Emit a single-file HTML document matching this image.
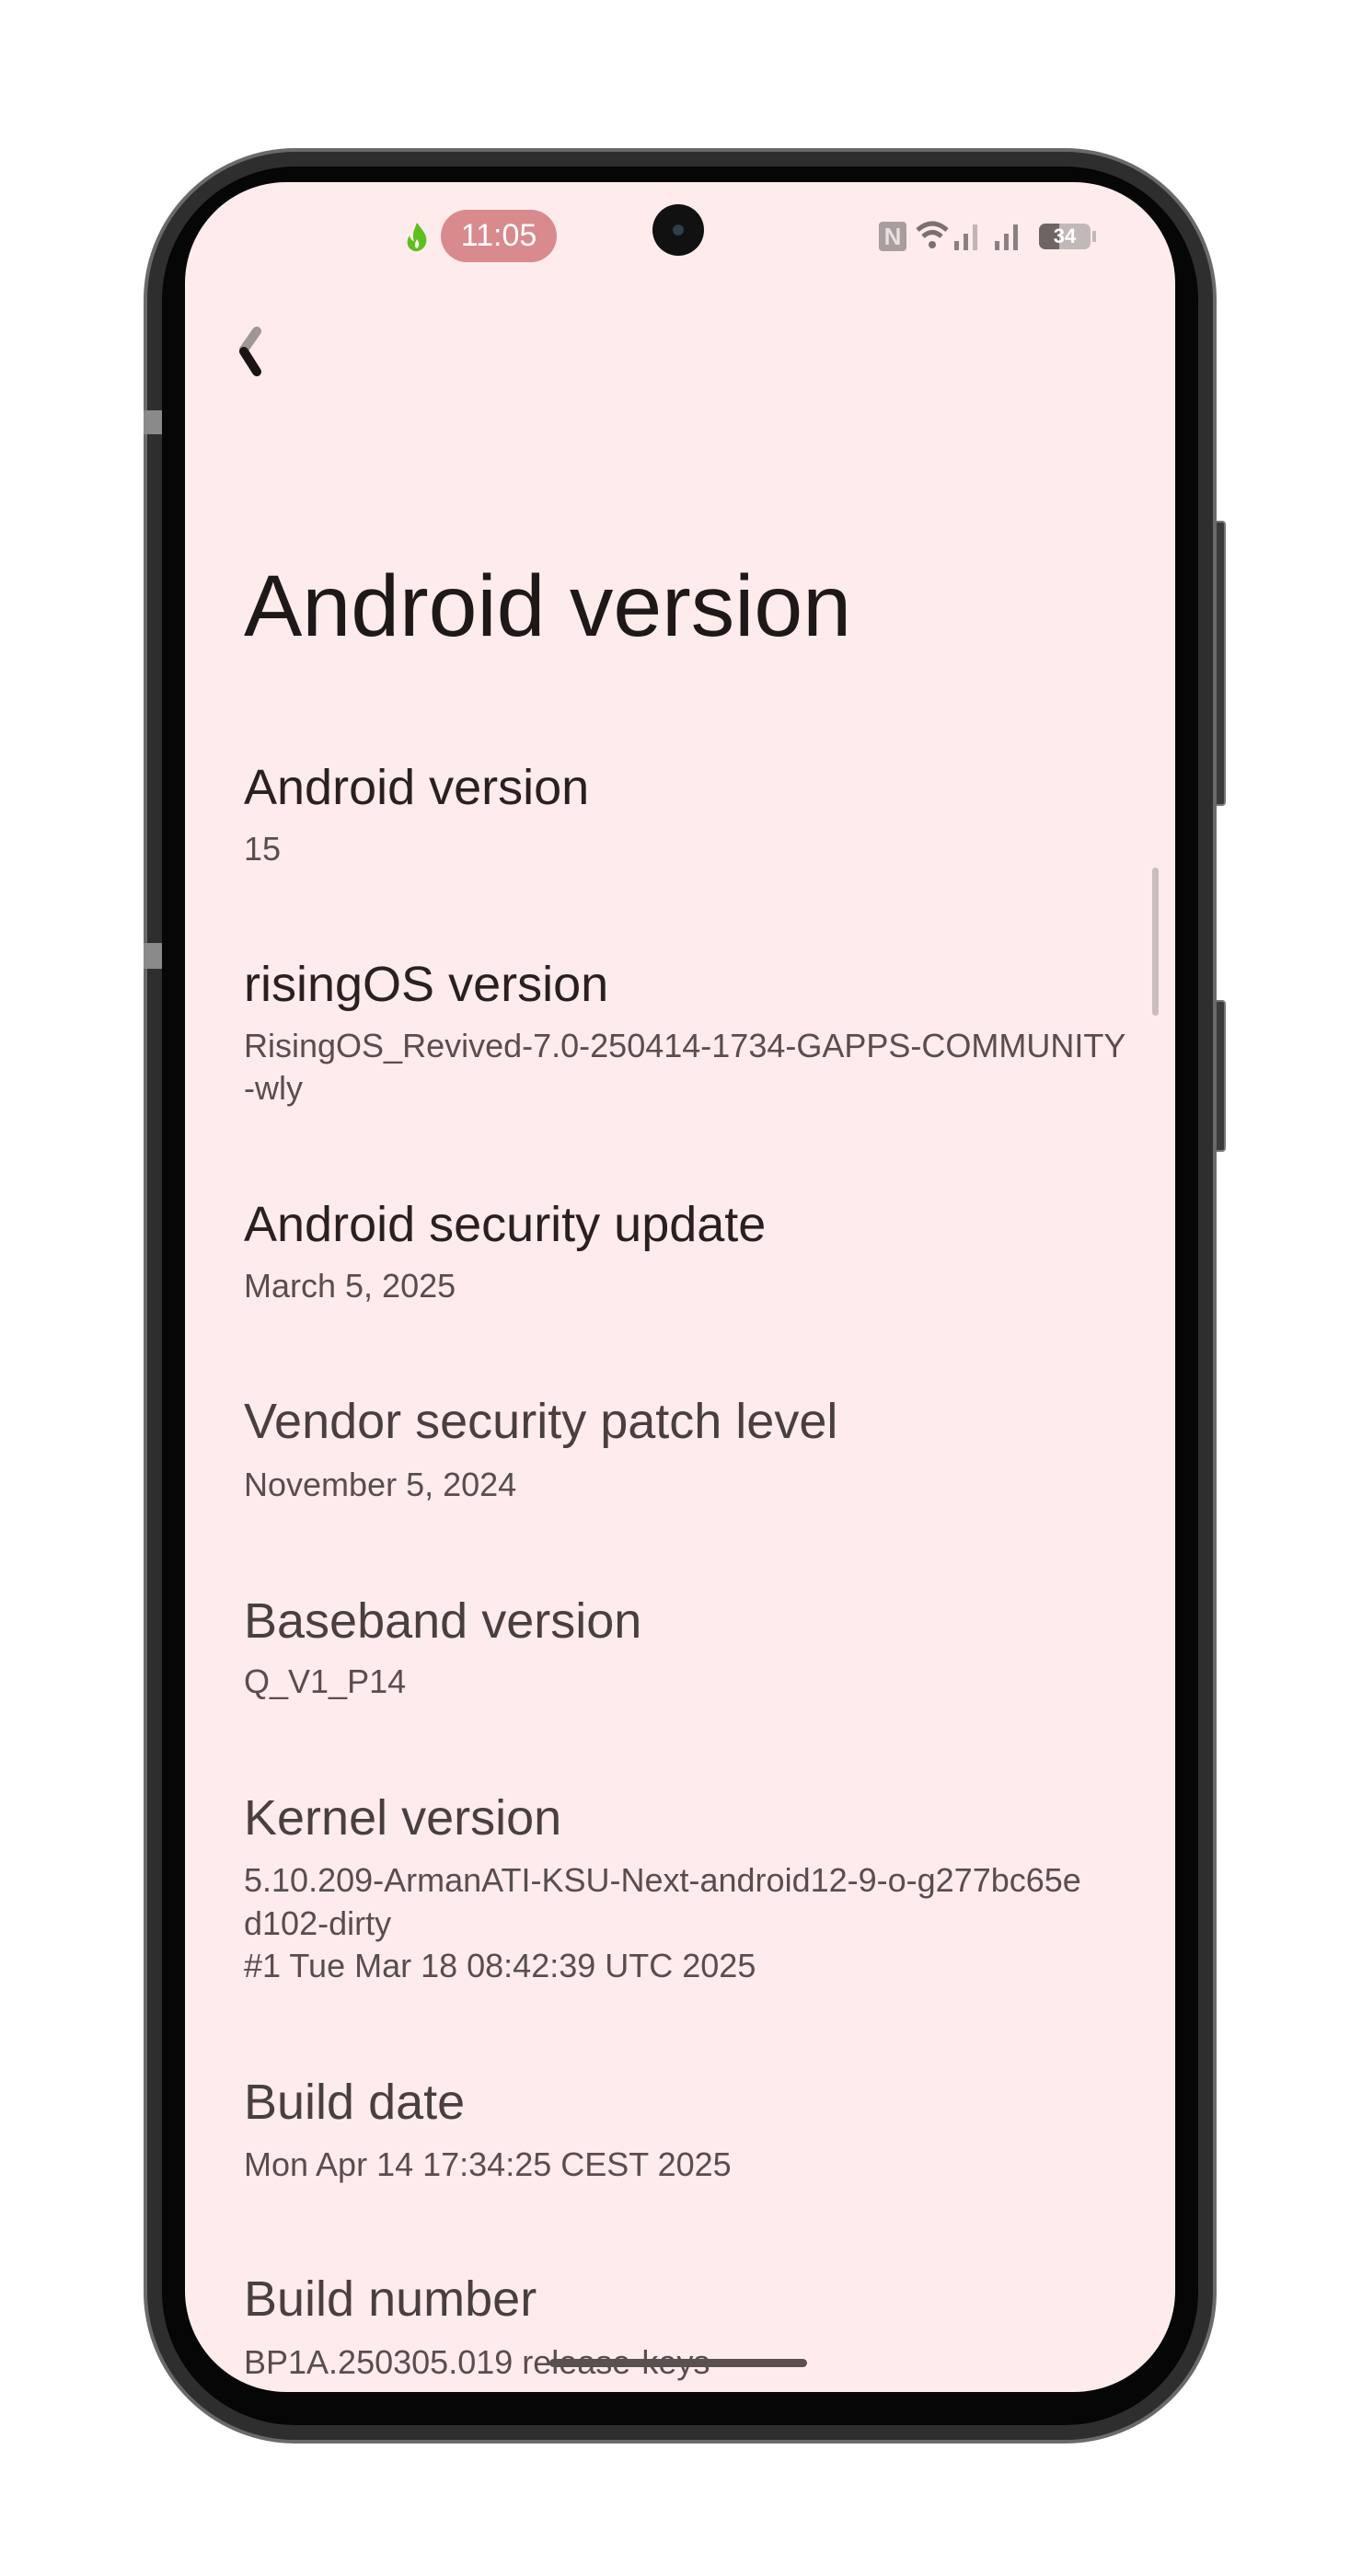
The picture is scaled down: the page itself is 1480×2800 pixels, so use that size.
<!DOCTYPE html>
<html><head><meta charset="utf-8"><style>
*{margin:0;padding:0;box-sizing:border-box}
body{width:1480px;height:2800px;background:#fff;position:relative;overflow:hidden;font-family:"Liberation Sans",sans-serif}
.abs{position:absolute}
.frame{left:156px;top:161px;width:1166px;height:2495px;border-radius:165px;background:#2e2e2e;border:4px solid #6a6a6a}
.bezel{left:176px;top:181px;width:1126px;height:2455px;border-radius:145px;background:#060606}
.screen{left:201px;top:198px;width:1076px;height:2402px;border-radius:110px;background:#fdeceb;overflow:hidden}
.t{position:absolute;left:64px;white-space:nowrap;line-height:1}
.h{font-size:54px;color:#2a2020}
.h2{font-size:54px;color:#4a3f3f}
.s{font-size:36px;color:#5a4d4d}
</style></head><body>
<div class="abs" style="left:1316px;top:566px;width:16px;height:310px;background:#3a3a3a;border-radius:4px;border:2px solid #777"></div>
<div class="abs" style="left:1316px;top:1087px;width:16px;height:165px;background:#3a3a3a;border-radius:4px;border:2px solid #777"></div>
<div class="abs frame"></div>
<div class="abs" style="left:156px;top:446px;width:22px;height:26px;background:#8a8a8a"></div>
<div class="abs" style="left:156px;top:1025px;width:22px;height:28px;background:#8a8a8a"></div>
<div class="abs bezel"></div>
<div class="abs screen">
  <svg class="abs" style="left:238px;top:42px" width="28" height="36" viewBox="0 0 28 36"><path d="M14 2 C20 10 26 16 24 24 C22 32 14 35 9 32 C3 29 2 22 6 16 C7 20 9 22 11 22 C8 14 12 8 14 2Z" fill="#5fbf1f"/><path d="M14 20 C17 24 17 28 14 30 C11 29 11 25 14 20Z" fill="#fdeceb"/></svg>
  <div class="abs" style="left:278px;top:30px;width:126px;height:57px;border-radius:29px;background:#d98a8c;color:#fff;font-size:34px;line-height:57px;text-align:center">11:05</div>
  <div class="abs" style="left:508px;top:24px;width:56px;height:56px;border-radius:50%;background:#111"><div class="abs" style="left:22px;top:22px;width:12px;height:12px;border-radius:50%;background:#2d3f4a"></div></div>
  <div class="abs" style="left:754px;top:43px;width:30px;height:32px;background:#a89e9e;border-radius:4px;color:#e8e0e0;font-size:26px;font-weight:bold;text-align:center;line-height:32px">N</div>
  <svg class="abs" style="left:792px;top:40px" width="40" height="36" viewBox="0 0 40 36"><path d="M4 12 Q20 -2 36 12" stroke="#7a7070" stroke-width="5" fill="none"/><path d="M10 19 Q20 10 30 19" stroke="#7a7070" stroke-width="5" fill="none"/><circle cx="20" cy="28" r="4" fill="#7a7070"/></svg>
  <svg class="abs" style="left:834px;top:42px" width="90" height="34" viewBox="0 0 90 34"><rect x="2" y="22" width="5" height="10" fill="#8a8080"/><rect x="12" y="14" width="5" height="18" fill="#8a8080"/><rect x="22" y="4" width="5" height="28" fill="#c0b6b6"/><rect x="46" y="22" width="5" height="10" fill="#8a8080"/><rect x="56" y="14" width="5" height="18" fill="#8a8080"/><rect x="66" y="4" width="5" height="28" fill="#8a8080"/></svg>
  <div class="abs" style="left:928px;top:45px;width:56px;height:28px;border-radius:7px;background:#c2b8b8;overflow:hidden"><div style="width:22px;height:28px;background:#6e6464"></div><div class="abs" style="left:0;top:0;width:56px;line-height:28px;text-align:center;color:#fff;font-size:22px;font-weight:bold">34</div></div>
  <div class="abs" style="left:986px;top:53px;width:4px;height:12px;background:#c2b8b8"></div>
  <svg class="abs" style="left:52px;top:152px" width="40" height="64" viewBox="0 0 40 64"><path d="M26 10 L12 30" stroke="#a09696" stroke-width="10" stroke-linecap="round"/><path d="M12 32 L26 54" stroke="#1c1414" stroke-width="10" stroke-linecap="round"/></svg>
  <div class="t" style="font-size:95px;color:#1f1818;top:414px">Android version</div>

  <div class="t h" style="top:631px">Android version</div>
  <div class="t s" style="top:707px">15</div>

  <div class="t h" style="top:845px">risingOS version</div>
  <div class="t s" style="top:921px">RisingOS_Revived-7.0-250414-1734-GAPPS-COMMUNITY</div>
  <div class="t s" style="top:967px">-wly</div>

  <div class="t h" style="top:1106px">Android security update</div>
  <div class="t s" style="top:1182px">March 5, 2025</div>

  <div class="t h2" style="top:1320px">Vendor security patch level</div>
  <div class="t s" style="top:1398px">November 5, 2024</div>

  <div class="t h2" style="top:1537px">Baseband version</div>
  <div class="t s" style="top:1612px">Q_V1_P14</div>

  <div class="t h2" style="top:1751px">Kernel version</div>
  <div class="t s" style="top:1828px">5.10.209-ArmanATI-KSU-Next-android12-9-o-g277bc65e</div>
  <div class="t s" style="top:1875px">d102-dirty</div>
  <div class="t s" style="top:1921px">#1 Tue Mar 18 08:42:39 UTC 2025</div>

  <div class="t h2" style="top:2060px">Build date</div>
  <div class="t s" style="top:2137px">Mon Apr 14 17:34:25 CEST 2025</div>

  <div class="t h2" style="top:2274px">Build number</div>
  <div class="t s" style="top:2352px">BP1A.250305.019 release-keys</div>

  <div class="abs" style="left:1051px;top:745px;width:7px;height:161px;border-radius:4px;background:#c9bdbd"></div>
  <div class="abs" style="left:396px;top:2366px;width:280px;height:9px;border-radius:5px;background:#5a5050"></div>
</div>
</body></html>
